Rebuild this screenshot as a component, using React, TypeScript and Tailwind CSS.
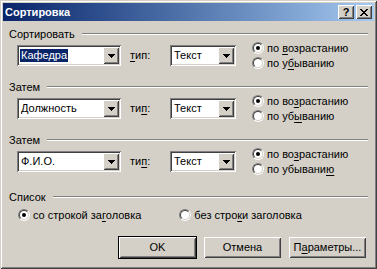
import React from "react";

const raised =
  "shadow-[inset_1px_1px_0_#ffffff,inset_-1px_-1px_0_#404040,inset_2px_2px_0_#d4d0c8,inset_-2px_-2px_0_#808080]";
const sunken =
  "shadow-[inset_1px_1px_0_#808080,inset_-1px_-1px_0_#ffffff,inset_2px_2px_0_#404040,inset_-2px_-2px_0_#d4d0c8]";

function U({ children }: { children: React.ReactNode }) {
  return <span className="underline decoration-1 underline-offset-[2px]">{children}</span>;
}

function GroupLabel({ text }: { text: string }) {
  return (
    <div className="h-[12px] flex items-center">
      <span className="leading-none pr-[7px]">{text}</span>
      <div className="flex-1 h-[2px] border-t border-t-[#808080] border-b border-b-white" />
    </div>
  );
}

function Combo({ value, width, selected }: { value: string; width: number; selected?: boolean }) {
  return (
    <div
      className={`relative h-[21px] bg-white flex items-center pl-[3px] ${sunken}`}
      style={{ width }}
    >
      <span className={`leading-[13px] px-[1px] ${selected ? "bg-[#0a246a] text-white" : ""}`}>{value}</span>
      <div
        className={`absolute right-[2px] top-[2px] w-[16px] h-[17px] bg-[#d4d0c8] flex items-center justify-center ${raised}`}
      >
        <svg width="7" height="4" viewBox="0 0 7 4">
          <path d="M0 0h7v1h-1v1h-1v1h-1v1h-1v-1h-1v-1h-1v-1h-1z" fill="#000" />
        </svg>
      </div>
    </div>
  );
}

function Radio({ checked }: { checked?: boolean }) {
  return (
    <div className="w-[12px] h-[12px] rounded-full border border-t-[#808080] border-l-[#808080] border-b-white border-r-white">
      <div className="w-full h-full rounded-full bg-white border border-t-[#404040] border-l-[#404040] border-b-[#d4d0c8] border-r-[#d4d0c8] flex items-center justify-center">
        {checked && <div className="w-[4px] h-[4px] rounded-full bg-black" />}
      </div>
    </div>
  );
}

function RadioRow({ checked, children }: { checked?: boolean; children: React.ReactNode }) {
  return (
    <div className="h-[15px] flex items-center gap-[3px]">
      <Radio checked={checked} />
      <span className="leading-none">{children}</span>
    </div>
  );
}

function SortGroup({
  label,
  field,
  selected,
  tip,
  asc,
  desc,
}: {
  label: string;
  field: string;
  selected?: boolean;
  tip: React.ReactNode;
  asc: React.ReactNode;
  desc: React.ReactNode;
}) {
  return (
    <div className="flex flex-col">
      <GroupLabel text={label} />
      <div className="h-[31px] flex items-center pl-[8px]">
        <Combo value={field} width={104} selected={selected} />
        <span className="ml-[9px] w-[40px] leading-none">{tip}</span>
        <Combo value="Текст" width={66} />
        <div className="ml-[16px] flex flex-col">
          <RadioRow checked>{asc}</RadioRow>
          <RadioRow>{desc}</RadioRow>
        </div>
      </div>
    </div>
  );
}

function Button({ children, isDefault }: { children: React.ReactNode; isDefault?: boolean }) {
  return (
    <div className={isDefault ? "border border-black" : "p-[1px]"}>
      <div className={`w-[77px] h-[21px] flex items-center justify-center bg-[#d4d0c8] ${raised}`}>
        <span className="leading-none">{children}</span>
      </div>
    </div>
  );
}

export default function App() {
  return (
    <div className="w-[377px] h-[269px] bg-[#d4d0c8] flex flex-col p-[3px] text-[11px] text-black font-['Liberation_Sans',Arial,sans-serif] shadow-[inset_1px_1px_0_#d4d0c8,inset_-1px_-1px_0_#404040,inset_2px_2px_0_#ffffff,inset_-2px_-2px_0_#808080]">
      <div className="h-[18px] flex items-center pl-[2px] pr-[2px] bg-gradient-to-r from-[#0a246a] to-[#a6caf0]">
        <span className="text-white font-bold text-[11px] leading-none flex-1">Сортировка</span>
        <div className={`w-[16px] h-[14px] bg-[#d4d0c8] flex items-center justify-center ${raised}`}>
          <span className="font-bold text-[11px] leading-none">?</span>
        </div>
        <div className={`ml-[2px] w-[16px] h-[14px] bg-[#d4d0c8] flex items-center justify-center ${raised}`}>
          <svg width="8" height="7" viewBox="0 0 8 7">
            <path d="M0 0h2v1h1v1h2v-1h1v-1h2v1h-1v1h-1v1h-1v1h1v1h1v1h1v1h-2v-1h-1v-1h-2v1h-1v1h-2v-1h1v-1h1v-1h1v-1h-1v-1h-1v-1h-1z" fill="#000" />
          </svg>
        </div>
      </div>
      <div className="flex flex-col px-[6px] pt-[7px]">
        <SortGroup
          label="Сортировать"
          field="Кафедра"
          selected
          tip={<><U>т</U>ип:</>}
          asc={<>по <U>в</U>озрастанию</>}
          desc={<>по у<U>б</U>ыванию</>}
        />
        <div className="h-[10px]" />
        <SortGroup
          label="Затем"
          field="Должность"
          tip={<>ти<U>п</U>:</>}
          asc={<>по во<U>з</U>растанию</>}
          desc={<>по уб<U>ы</U>ванию</>}
        />
        <div className="h-[10px]" />
        <SortGroup
          label="Затем"
          field="Ф.И.О."
          tip={<>ти<U>п</U>:</>}
          asc={<>по во<U>з</U>растанию</>}
          desc={<>по убывани<U>ю</U></>}
        />
        <div className="h-[14px]" />
        <GroupLabel text="Список" />
        <div className="mt-[5px] h-[14px] flex items-center pl-[9px]">
          <RadioRow checked>
            со строкой за<U>г</U>оловка
          </RadioRow>
          <div className="ml-[38px]">
            <RadioRow>
              без стро<U>к</U>и заголовка
            </RadioRow>
          </div>
        </div>
        <div className="mt-[14px] flex justify-end gap-[6px] pr-[1px]">
          <Button isDefault>OK</Button>
          <Button>Отмена</Button>
          <Button>
            П<U>а</U>раметры...
          </Button>
        </div>
      </div>
    </div>
  );
}
